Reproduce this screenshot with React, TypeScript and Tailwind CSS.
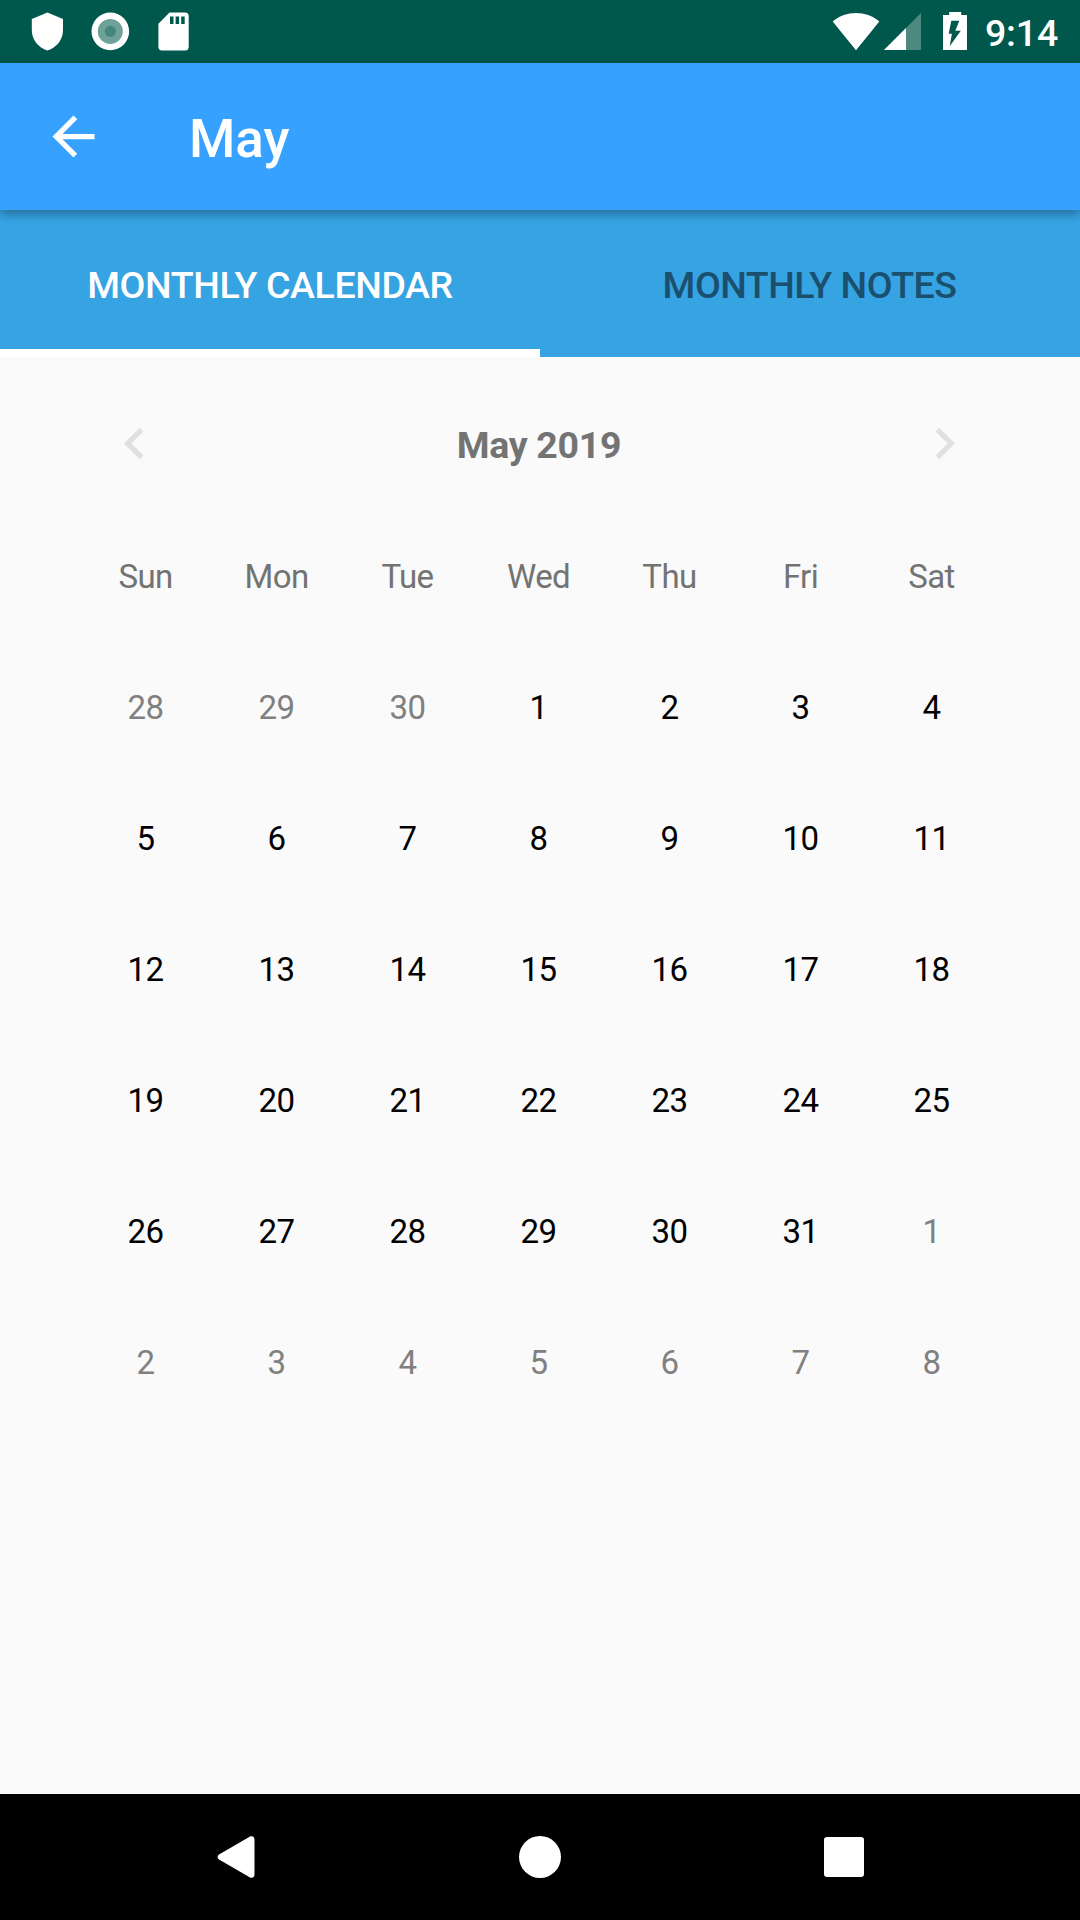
import React from 'react';

const weekdays = ['Sun', 'Mon', 'Tue', 'Wed', 'Thu', 'Fri', 'Sat'];
const days = Array.from({ length: 42 }, (_, i) => {
  if (i < 3) return { n: 28 + i, current: false };
  if (i < 34) return { n: i - 2, current: true };
  return { n: i - 33, current: false };
});

export default function App() {
  return (
    <div className="flex h-[1920px] w-[1080px] flex-col overflow-hidden bg-[#fafafa] font-['Roboto',sans-serif]">
      <header className="flex h-[63px] shrink-0 items-center justify-between bg-[#00574b] pl-[16px] pr-[21px] text-white">
        <div className="flex items-center">
          <svg className="h-[63px] w-[63px]" viewBox="0 0 63 63" fill="currentColor"><path d="M31.400 12.400 47 19v11c0 10-6.500 17.500-15.600 20.500C22.300 47.500 15.800 40 15.800 30V19z" /></svg>
          <svg className="h-[63px] w-[63px]" viewBox="0 0 63 63"><circle cx="31.300" cy="31.400" r="18.800" fill="#fff" /><circle cx="31.300" cy="31.400" r="12.500" fill="#6fa199" /><circle cx="31.300" cy="31.400" r="5.600" fill="#44867b" /></svg>
          <svg className="h-[63px] w-[63px]" viewBox="0 0 63 63" fill="currentColor"><path fillRule="evenodd" d="M27.500 12.600h15.600q3.600 0 3.600 3.600v30.600q0 3.600-3.600 3.600H20q-3.600 0-3.600-3.600V23.700zM28 16.500V24h3.500v-7.500zm5.600 0V24h3.500v-7.500zm5.600 0V24h3.500v-7.500z" /></svg>
        </div>
        <div className="flex items-center">
          <svg className="h-[63px] w-[160px]" viewBox="825 0 160 63" fill="currentColor"><path d="M832.700 21.500C846 10.200 866 10.200 879.300 21.500L856 50.200z" /><path opacity=".3" d="M884 50 921 13v37z" /><path d="M884 50 906 28v22z" /><path fillRule="evenodd" d="M949.200 12h12v3H967v35h-24V15h6.200zM951.300 20.700 948.700 33.700h3.200L949.700 46.200 960.800 30.700h-5.500l4-10z" /></svg>
          <span className="w-[74px] pr-[1px] pt-[3px] text-right text-[37.500px] font-medium tracking-[-0.2px]">9:14</span>
        </div>
      </header>
      <div className="z-10 flex h-[147px] shrink-0 items-center bg-[#37a1ff] pl-[42px] text-white shadow-[0_4px_10px_rgba(0,0,0,0.34)]">
        <svg className="h-[63px] w-[63px]" viewBox="0 0 24 24" fill="currentColor"><path d="M20 11H7.830l5.590-5.590L12 4l-8 8 8 8 1.410-1.410L7.830 13H20z" /></svg>
        <h1 className="ml-[84px] pt-[7px] text-[53px] font-medium">May</h1>
      </div>
      <nav className="grid h-[147px] shrink-0 grid-cols-2 bg-[#36a3e3] text-[37.500px] font-medium tracking-[-0.4px]">
        <div className="flex items-center justify-center border-b-[8px] border-white pt-[12px] text-white">MONTHLY CALENDAR</div>
        <div className="flex items-center justify-center pr-[1px] pt-[4px] tracking-[-0.5px] text-[#1b4f6e]">MONTHLY NOTES</div>
      </nav>
      <main className="w-[997px] flex-1 pl-[80px] pt-[21px]">
        <div className="flex h-[131px] items-center justify-between pl-[23px] pr-[21px] text-[#e0e0e0]">
          <svg className="h-[63px] w-[63px]" viewBox="0 0 24 24" fill="currentColor"><path d="M15.410 7.410 14 6l-6 6 6 6 1.410-1.410L10.830 12z" /></svg>
          <h2 className="pr-[1px] pt-[4px] text-[37.500px] font-bold tracking-[-0.3px] text-[#737373]">May 2019</h2>
          <svg className="h-[63px] w-[63px]" viewBox="0 0 24 24" fill="currentColor"><path d="M10 6 8.590 7.410 13.170 12l-4.580 4.590L10 18l6-6z" /></svg>
        </div>
        <div className="grid auto-rows-[131px] grid-cols-7 text-[33px] tracking-[-0.6px]">
          {weekdays.map((d) => <div key={d} className="flex items-center justify-center pt-[4px] text-[#737373]">{d}</div>)}
          {days.map((d, i) => <div key={i} className={`flex items-center justify-center pt-[4px] ${d.current ? 'text-black' : 'text-[#808080]'}`}>{d.n}</div>)}
        </div>
      </main>
      <footer className="h-[126px] shrink-0 bg-black text-white">
        <svg className="h-[126px] w-[1080px]" viewBox="0 0 1080 126" fill="currentColor"><path d="M219 60.500 250.500 42.300Q254.500 41.500 254.500 46V80Q254.500 84.500 250.500 83.700L219 65.500Q216 63 219 60.500z" /><circle cx="540" cy="63" r="21" /><rect x="824" y="43" width="40" height="40" rx="3" /></svg>
      </footer>
    </div>
  );
}
